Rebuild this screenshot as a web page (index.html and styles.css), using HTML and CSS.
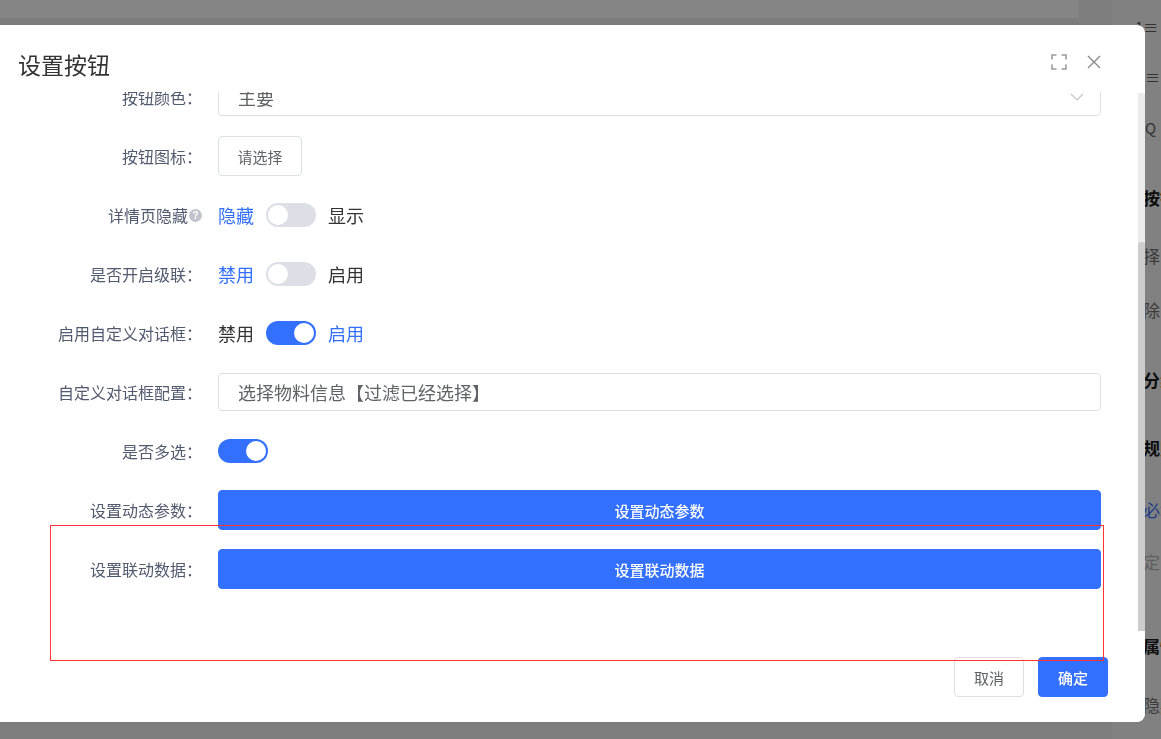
FILE: index.html
```html
<!DOCTYPE html>
<html lang="zh-CN">
<head>
    <meta charset="UTF-8">
    <meta name="viewport" content="width=device-width, initial-scale=1.0">
    <title>设置按钮</title>
    <link rel="stylesheet" href="styles.css">
</head>
<body>
    <!-- page behind the dialog, already dimmed by the mask -->
    <div class="page">
        <div class="page-main">
            <div class="page-top"></div>
        </div>
        <div class="page-side">
            <div class="side-item h50 icon first">1≡</div>
            <div class="side-item h51 icon">≡</div>
            <div class="side-item h70 icon">Q</div>
            <div class="side-item h58 bold">按钮</div>
            <div class="side-item h54">择</div>
            <div class="side-item h70">除</div>
            <div class="side-item h68 bold">分组</div>
            <div class="side-item h62 bold">规则</div>
            <div class="side-item h52 blue">必填</div>
            <div class="side-item h84 light">定</div>
            <div class="side-item h59 bold">属性</div>
            <div class="side-item">隐藏</div>
        </div>
    </div>

    <div class="dialog">
        <div class="dialog-header">
            <div class="dialog-title">设置按钮</div>
            <div class="dialog-tools">
                <svg class="tool-icon" width="16" height="16" viewBox="0 0 16 16">
                    <path d="M1 5.5V1h4.5M10.5 1H15v4.5M15 10.5V15h-4.5M5.5 15H1v-4.5" fill="none" stroke="#9a9a9a" stroke-width="1.6"/>
                </svg>
                <svg class="tool-icon" width="14" height="14" viewBox="0 0 14 14">
                    <path d="M1 1l12 12M13 1L1 13" fill="none" stroke="#8c8c8c" stroke-width="1.4"/>
                </svg>
            </div>
        </div>

        <div class="dialog-body">
            <div class="form">
                <div class="form-inner">
                    <div class="form-row">
                        <div class="form-label">按钮颜色：</div>
                        <div class="form-control">
                            <div class="input select">
                                <span class="input-text muted">主要</span>
                                <svg width="14" height="8" viewBox="0 0 14 8">
                                    <path d="M1 1l6 6 6-6" fill="none" stroke="#c0c4cc" stroke-width="1.2"/>
                                </svg>
                            </div>
                        </div>
                    </div>

                    <div class="form-row">
                        <div class="form-label">按钮图标：</div>
                        <div class="form-control">
                            <button class="btn btn-plain btn-pick">请选择</button>
                        </div>
                    </div>

                    <div class="form-row">
                        <div class="form-label">详情页隐藏<span class="help">?</span></div>
                        <div class="form-control switch-group">
                            <span class="switch-text active">隐藏</span>
                            <span class="switch"><span class="switch-knob"></span></span>
                            <span class="switch-text">显示</span>
                        </div>
                    </div>

                    <div class="form-row">
                        <div class="form-label">是否开启级联：</div>
                        <div class="form-control switch-group">
                            <span class="switch-text active">禁用</span>
                            <span class="switch"><span class="switch-knob"></span></span>
                            <span class="switch-text">启用</span>
                        </div>
                    </div>

                    <div class="form-row">
                        <div class="form-label">启用自定义对话框：</div>
                        <div class="form-control switch-group">
                            <span class="switch-text">禁用</span>
                            <span class="switch on"><span class="switch-knob"></span></span>
                            <span class="switch-text active">启用</span>
                        </div>
                    </div>

                    <div class="form-row">
                        <div class="form-label">自定义对话框配置：</div>
                        <div class="form-control">
                            <div class="input">
                                <span class="input-text">选择物料信息【过滤已经选择】</span>
                            </div>
                        </div>
                    </div>

                    <div class="form-row">
                        <div class="form-label">是否多选：</div>
                        <div class="form-control switch-group">
                            <span class="switch on"><span class="switch-knob"></span></span>
                        </div>
                    </div>

                    <div class="form-row">
                        <div class="form-label">设置动态参数：</div>
                        <div class="form-control">
                            <button class="btn btn-primary btn-block">设置动态参数</button>
                        </div>
                    </div>

                    <div class="form-row">
                        <div class="form-label">设置联动数据：</div>
                        <div class="form-control">
                            <button class="btn btn-primary btn-block">设置联动数据</button>
                        </div>
                    </div>
                </div>
            </div>
            <div class="scrollbar">
                <div class="scrollbar-thumb"></div>
            </div>
        </div>

        <div class="dialog-footer">
            <button class="btn btn-plain btn-footer">取消</button>
            <button class="btn btn-primary btn-footer">确定</button>
        </div>
    </div>

    <!-- red highlight drawn over the screenshot -->
    <div class="mark"></div>
</body>
</html>
```

FILE: styles.css
```css
* {
    box-sizing: border-box;
}

body {
    margin: 0;
    width: 1161px;
    height: 739px;
    overflow: hidden;
    font-family: "Noto Sans CJK SC", "Noto Sans", sans-serif;
    background-color: #7d7d7d;
}

/* background page */
.page {
    display: flex;
    height: 739px;
}

.page-main {
    flex: 1;
}

.page-top {
    width: 1079px;
    height: 18px;
    background: #858585;
}

.page-side {
    width: 49px;
    padding: 17px 0 0 31px;
    background: #818181;
    overflow: hidden;
    white-space: nowrap;
}

.side-item {
    font-size: 17px;
    line-height: 20px;
    color: #3c3c3c;
}

.side-item.icon {
    font-size: 15px;
    color: #333;
    margin-left: 2px;
}

.side-item.icon.first {
    margin-left: -8px;
}

.side-item.bold {
    font-weight: bold;
    color: #0d0d0d;
}

.side-item.blue {
    color: #1d3a88;
}

.side-item.light {
    color: #5f5f5f;
}

.h50 { height: 50px; }
.h51 { height: 51px; }
.h52 { height: 52px; }
.h54 { height: 54px; }
.h58 { height: 58px; }
.h59 { height: 59px; }
.h62 { height: 62px; }
.h68 { height: 68px; }
.h70 { height: 70px; }
.h84 { height: 84px; }

/* dialog */
.dialog {
    position: fixed;
    left: 0;
    top: 25px;
    width: 1145px;
    height: 697px;
    background: #fff;
    border-radius: 0 8px 8px 0;
    display: flex;
    flex-direction: column;
    overflow: hidden;
}

.dialog-header {
    height: 67px;
    flex-shrink: 0;
    display: flex;
    align-items: flex-start;
    justify-content: space-between;
    padding: 26px 44px 0 18px;
}

.dialog-title {
    font-size: 23px;
    line-height: 26px;
    color: #333;
}

.dialog-tools {
    display: flex;
    align-items: center;
    gap: 20px;
    padding-top: 3px;
}

.tool-icon {
    display: block;
}

.dialog-body {
    flex: 1;
    display: flex;
    min-height: 0;
}

.form {
    flex: 1;
    overflow: hidden;
    padding: 0 37px 0 18px;
}

.form-inner {
    margin-top: -15px;
}

.form-row {
    display: flex;
    align-items: center;
    height: 40px;
    margin-bottom: 19px;
}

.form-label {
    width: 184px;
    margin-right: 16px;
    flex-shrink: 0;
    text-align: right;
    font-size: 16px;
    line-height: 20px;
    color: #515a6e;
    display: flex;
    justify-content: flex-end;
    align-items: center;
}

.help {
    width: 13px;
    height: 13px;
    margin-left: 1px;
    border-radius: 50%;
    background: #c0c4cc;
    color: #fff;
    font-size: 10px;
    font-weight: bold;
    line-height: 13px;
    text-align: center;
    font-family: "Liberation Sans", sans-serif;
}

.form-control {
    flex: 1;
    display: flex;
    align-items: center;
}

.input {
    width: 100%;
    height: 38px;
    border: 1px solid #dcdfe6;
    border-radius: 4px;
    padding: 0 16px 0 19px;
    display: flex;
    align-items: center;
    justify-content: space-between;
}

.input-text {
    font-size: 18px;
    line-height: 22px;
    color: #606266;
}

.input-text.muted {
    color: #606266;
}

.switch-group {
    gap: 12px;
}

.switch-text {
    font-size: 18px;
    line-height: 22px;
    color: #333;
}

.switch-text.active {
    color: #3370ff;
}

.switch {
    width: 50px;
    height: 24px;
    border-radius: 12px;
    background: #dcdfe6;
    padding: 2px;
    display: flex;
    flex-shrink: 0;
}

.switch.on {
    background: #3370ff;
    justify-content: flex-end;
}

.switch-knob {
    width: 20px;
    height: 20px;
    border-radius: 50%;
    background: #fff;
}

.btn {
    font-family: inherit;
    font-size: 15px;
    border-radius: 4px;
    cursor: pointer;
    padding: 0;
}

.btn-plain {
    background: #fff;
    border: 1px solid #dcdfe6;
    color: #606266;
}

.btn-primary {
    background: #3370ff;
    border: 1px solid #3370ff;
    color: #fff;
    font-weight: 500;
}

.btn-pick {
    width: 84px;
    height: 40px;
}

.btn-block {
    width: 100%;
    height: 40px;
}

.scrollbar {
    width: 7px;
    margin: 1px 0 0;
    background: #ebebeb;
    display: flex;
    flex-direction: column;
}

.scrollbar-thumb {
    flex: 1;
    margin-top: 149px;
    background: #cdcdcd;
    border-radius: 3px 3px 0 0;
}

.dialog-footer {
    height: 91px;
    flex-shrink: 0;
    display: flex;
    justify-content: flex-end;
    align-items: flex-start;
    gap: 14px;
    padding: 26px 37px 0 0;
}

.btn-footer {
    width: 70px;
    height: 40px;
}

.mark {
    position: fixed;
    left: 50px;
    top: 525px;
    width: 1054px;
    height: 136px;
    border: 1px solid #f33;
}
```
